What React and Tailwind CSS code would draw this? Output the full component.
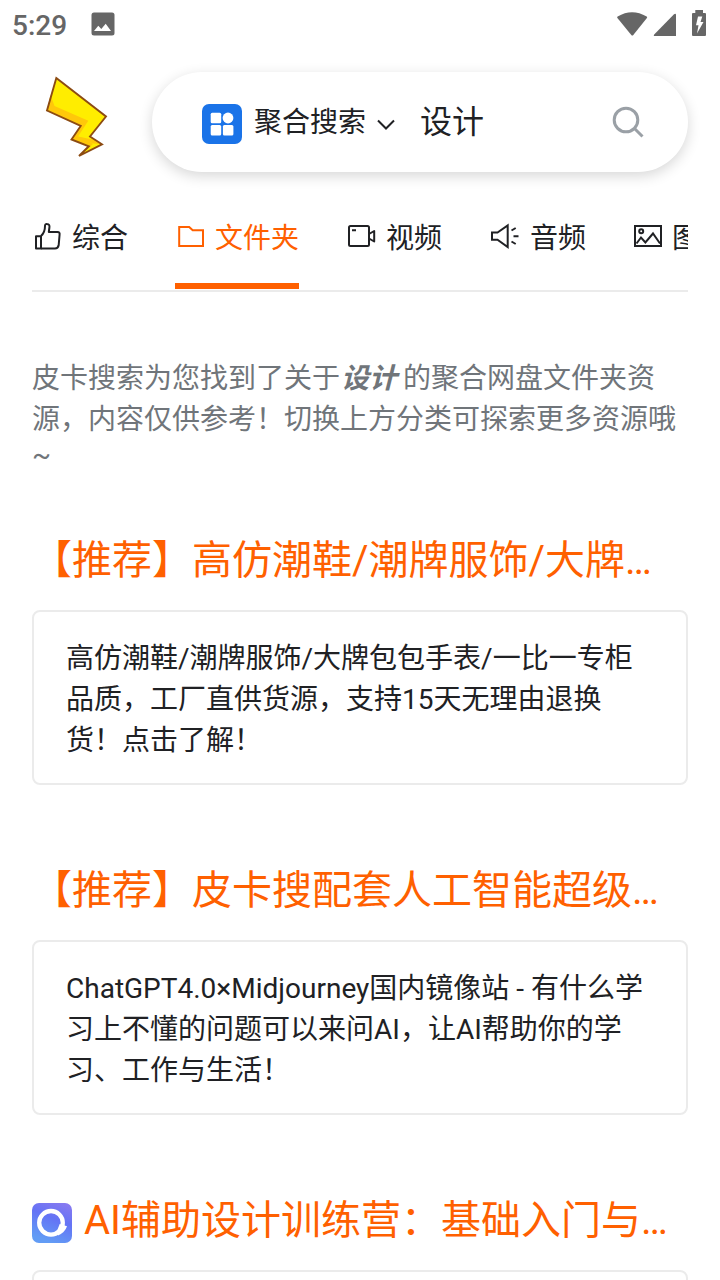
import { clsx } from "clsx";

function StatusBar() {
  return (
    <div className="flex h-12 items-center justify-between pl-3 pr-3 text-[#666]">
      <div className="flex items-center gap-6">
        <span className="mt-1 text-[28px] leading-8 font-medium">5:29</span>
        <svg width="24" height="24" viewBox="0 0 24 24">
          <rect x="0.5" y="0.5" width="23" height="23" rx="2.5" fill="currentColor" />
          <path d="M3 19 L7.3 13.7 L10.3 17 L14.7 11.7 L20 19 Z" fill="#fff" />
        </svg>
      </div>
      <svg width="92" height="28" viewBox="0 0 92 28" fill="currentColor" className="mt-0.5 overflow-visible">
        <path d="M1.4 7.1 Q0.7 6.2 1.6 5.5 Q16 -3 30.7 5.5 Q31.6 6.2 30.9 7.1 L17.3 24 Q16.3 25.1 15.3 24 Z" />
        <path d="M58 3.2 Q60 2 60 4 V25 H39 Q37 25 38.2 23.4 Z" />
        <path
          fillRule="evenodd"
          d="M79.3 -1 H87 V2 H89 Q90 2 90 3 V24 Q90 25 89 25 H77 Q76 25 76 24 V3 Q76 2 77 2 H79.3 Z M82 5.5 L80 14.2 H82.5 L81 22.5 L87.5 11 H84.5 L86.3 5.5 Z"
        />
      </svg>
    </div>
  );
}

function Logo() {
  return (
    <svg className="mt-[27px] ml-[13px] shrink-0" width="64" height="90" viewBox="0 0 64 90">
      <path d="M11.3 3 L61 41.5 L45 61.5 L57 69.3 L34 81 L43.8 71.3 L26.5 64.5 L35.7 51 L2 35.5 Z" fill="#ffed00" />
      <path d="M5.5 20 L9.5 31 L43.3 45.7 L33 61.5 L50 65 L57 69.3 L48 68.5 L43 66 L26.5 64.5 L35.5 51 L2 35.5 Z" fill="#ffc80a" />
      <path d="M26.5 64.5 L33 61.5 L46 66 L44 70.5 Z M34 81 L43.5 71.3 L45 67 L48 69 Z" fill="#ffc80a" />
      <path
        d="M11.3 3 L61 41.5 L45 61.5 L57 69.3 L34 81 L43.8 71.3 L26.5 64.5 L35.7 51 L2 35.5 Z"
        fill="none"
        stroke="#8c4b12"
        strokeWidth="1.9"
      />
    </svg>
  );
}

function SearchBox() {
  return (
    <div className="mt-6 flex h-[100px] w-[536px] items-center rounded-full bg-white pl-[50px] pr-11 shadow-[0_4px_14px_rgba(0,0,0,0.16)]">
      <svg width="40" height="40" viewBox="0 0 40 40" className="mt-1">
        <rect width="40" height="40" rx="7" fill="#1a73e8" />
        <g fill="#fff">
          <rect x="8.7" y="8.7" width="10.5" height="10.5" rx="1.5" />
          <circle cx="26" cy="14" r="5.4" />
          <rect x="8.7" y="20.9" width="10.5" height="10.5" rx="1.5" />
          <rect x="20.9" y="20.9" width="10.5" height="10.5" rx="1.5" />
        </g>
      </svg>
      <span className="ml-3 mb-1 text-[28px] leading-[normal]">聚合搜索</span>
      <svg width="18" height="12" viewBox="0 0 18 12" className="ml-[11px] mt-1.5" fill="none" stroke="currentColor" strokeWidth="2">
        <path d="M1 1.5 L9 9.5 L17 1.5" />
      </svg>
      <span className="ml-[25px] mb-1.5 grow text-[32px] leading-[normal]">设计</span>
      <svg width="32" height="32" viewBox="0 0 32 32" fill="none" stroke="#9aa0a6" strokeWidth="3">
        <circle cx="14" cy="14" r="11.8" />
        <path d="M22 22 L30.5 30.5" />
      </svg>
    </div>
  );
}

const tabs = [
  {
    label: "综合",
    className: "-mr-px",
    iconClass: "mr-2.5",
    icon: (
      <g strokeLinejoin="round">
        <path d="M4 14.2 H9 V26.5 H4 Z" />
        <path d="M9 14 Q13 10.5 13 4 Q13 1.8 15 2 Q18 2.2 17.4 5.5 L16.8 10 H25.5 Q28 10.2 27.6 12.5 L26.7 23 Q26 26.5 23 26.5 H9" />
      </g>
    ),
  },
  {
    label: "文件夹",
    active: true,
    iconClass: "mr-2.5",
    icon: <path d="M4.2 5 H14.2 L17.7 8.3 H28 V24 H4.2 Z" />,
  },
  {
    label: "视频",
    className: "pr-px",
    iconClass: "mr-[9px]",
    icon: (
      <g strokeLinejoin="round">
        <rect x="2" y="4" width="20" height="20" rx="1.5" />
        <path d="M5 8.2 H9 M22 12 L27.2 9 V19.5 L22 16.5" />
      </g>
    ),
  },
  {
    label: "音频",
    className: "pr-px",
    iconClass: "mr-[9px]",
    icon: (
      <g>
        <path d="M1 10.5 H6.5 L16.7 3.5 V25 L6.5 17.7 H1 Z" />
        <path d="M20.5 8.5 L24.7 6 M22.5 14.2 H27.5 M20.5 19.5 L24.7 22" />
      </g>
    ),
  },
  {
    label: "图片",
    iconClass: "mr-[7px]",
    icon: (
      <g>
        <rect x="0" y="4" width="26" height="20" />
        <circle cx="6.2" cy="9.2" r="2" />
        <path d="M1.5 21.5 L6 15.5 L10.4 20.5 L18 11.5 L25 21.5" />
      </g>
    ),
  },
];

function Tabs() {
  return (
    <nav className="mx-8 mt-8 flex h-[88px] gap-12 overflow-hidden border-b-2 border-[#ebebeb]">
      {tabs.map((tab) => (
        <div
          key={tab.label}
          className={clsx(
            "flex h-[85px] shrink-0 items-start border-b-6 pt-3",
            tab.active ? "border-[#ff6000] text-[#ff6000]" : "border-transparent",
            tab.className,
          )}
        >
          <svg
            width="30"
            height="30"
            viewBox="0 0 30 30"
            className={clsx("mt-1.5 shrink-0 overflow-visible", tab.iconClass)}
            fill="none"
            stroke="currentColor"
            strokeWidth="2"
          >
            {tab.icon}
          </svg>
          <span className="text-[28px] leading-[normal]">{tab.label}</span>
        </div>
      ))}
    </nav>
  );
}

function CourseIcon() {
  return (
    <svg width="40" height="40" viewBox="0 0 40 40" className="mr-3 mt-[18px] shrink-0">
      <defs>
        <linearGradient id="course" x1="0.9" y1="0" x2="0.5" y2="1">
          <stop offset="0" stopColor="#8a7af0" />
          <stop offset="0.45" stopColor="#6473f5" />
          <stop offset="1" stopColor="#629cf5" />
        </linearGradient>
      </defs>
      <rect width="40" height="40" rx="7" fill="url(#course)" />
      <circle cx="19" cy="19.8" r="11.8" fill="none" stroke="#fff" strokeWidth="4.3" />
      <path d="M27.7 21 L35 23.3 Q33 29.5 26 32.5 L25 28 Z" fill="#fff" />
    </svg>
  );
}

const results = [
  {
    title: "【推荐】高仿潮鞋/潮牌服饰/大牌…",
    text: "高仿潮鞋/潮牌服饰/大牌包包手表/一比一专柜品质，工厂直供货源，支持15天无理由退换货！点击了解！",
  },
  {
    title: "【推荐】皮卡搜配套人工智能超级…",
    text: "ChatGPT4.0×Midjourney国内镜像站 - 有什么学习上不懂的问题可以来问AI，让AI帮助你的学习、工作与生活！",
  },
  {
    title: "AI辅助设计训练营：基础入门与…",
    icon: <CourseIcon />,
    text: "",
  },
];

export default function App() {
  return (
    <div
      lang="zh-CN"
      className="h-screen w-full overflow-hidden bg-white text-[#202124] font-['Roboto','Noto_Sans_CJK_SC',sans-serif]"
    >
      <StatusBar />
      <header className="flex items-start justify-between pl-8 pr-8">
        <Logo />
        <SearchBox />
      </header>
      <Tabs />
      <p className="mx-8 mt-[66px] h-[114px] text-[28px] leading-[29px] text-[#70757a]">
        <span className="leading-[41px]">
          皮卡搜索为您找到了关于<em className="ml-px -mr-px font-bold">设计</em> 的聚合网盘文件夹资源，内容仅供参考！切换上方分类可探索更多资源哦
        </span>
        ~
      </p>
      <main className="mx-8 mt-[52px] flex flex-col gap-[69px]">
        {results.map((item) => (
          <section key={item.title}>
            <div className="flex h-[60px] items-center text-[40px] leading-[normal] whitespace-nowrap text-[#ff6000]">
              {item.icon}
              <h3 className="mt-[5px]">{item.title}</h3>
            </div>
            <div className="mt-[26px] h-[175px] rounded-lg border-2 border-[#ebebeb] px-8 pt-[26px] text-[28px] leading-[41px]">
              {item.text}
            </div>
          </section>
        ))}
      </main>
    </div>
  );
}
